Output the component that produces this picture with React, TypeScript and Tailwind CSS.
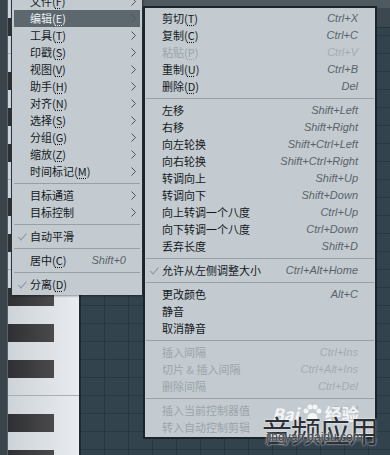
import React from "react";

type Entry =
  | { sep: true }
  | {
      sep?: false;
      label: string;
      mn?: string;
      sc?: string;
      arrow?: boolean;
      check?: boolean;
      off?: boolean;
      active?: boolean;
    };

const leftItems: Entry[] = [
  { label: "文件", mn: "F", arrow: true },
  { label: "编辑", mn: "E", arrow: true, active: true },
  { label: "工具", mn: "T", arrow: true },
  { label: "印戳", mn: "S", arrow: true },
  { label: "视图", mn: "V", arrow: true },
  { label: "助手", mn: "H", arrow: true },
  { label: "对齐", mn: "N", arrow: true },
  { label: "选择", mn: "S", arrow: true },
  { label: "分组", mn: "G", arrow: true },
  { label: "缩放", mn: "Z", arrow: true },
  { label: "时间标记", mn: "M", arrow: true },
  { sep: true },
  { label: "目标通道", arrow: true },
  { label: "目标控制", arrow: true },
  { sep: true },
  { label: "自动平滑", check: true },
  { sep: true },
  { label: "居中", mn: "C", sc: "Shift+0" },
  { sep: true },
  { label: "分离", mn: "D", check: true },
];

const rightItems: Entry[] = [
  { label: "剪切", mn: "T", sc: "Ctrl+X" },
  { label: "复制", mn: "C", sc: "Ctrl+C" },
  { label: "粘贴", mn: "P", sc: "Ctrl+V", off: true },
  { label: "重制", mn: "U", sc: "Ctrl+B" },
  { label: "删除", mn: "D", sc: "Del" },
  { sep: true },
  { label: "左移", sc: "Shift+Left" },
  { label: "右移", sc: "Shift+Right" },
  { label: "向左轮换", sc: "Shift+Ctrl+Left" },
  { label: "向右轮换", sc: "Shift+Ctrl+Right" },
  { label: "转调向上", sc: "Shift+Up" },
  { label: "转调向下", sc: "Shift+Down" },
  { label: "向上转调一个八度", sc: "Ctrl+Up" },
  { label: "向下转调一个八度", sc: "Ctrl+Down" },
  { label: "丢弃长度", sc: "Shift+D" },
  { sep: true },
  { label: "允许从左侧调整大小", sc: "Ctrl+Alt+Home", check: true },
  { sep: true },
  { label: "更改颜色", sc: "Alt+C" },
  { label: "静音" },
  { label: "取消静音" },
  { sep: true },
  { label: "插入间隔", sc: "Ctrl+Ins", off: true },
  { label: "切片 & 插入间隔", sc: "Ctrl+Alt+Ins", off: true },
  { label: "删除间隔", sc: "Ctrl+Del", off: true },
  { sep: true },
  { label: "插入当前控制器值", sc: "Ctrl+I", off: true },
  { label: "转入自动控制剪辑", off: true },
];

// descending from B: white / black
const keyPattern = ["w", "b", "w", "b", "w", "b", "w", "w", "b", "w", "b", "w"];

function Chevron() {
  return (
    <svg width="5" height="9" viewBox="0 0 5 9" className="block">
      <polyline points="0.5,0.5 4.5,4.5 0.5,8.5" fill="none" stroke="#4a545b" strokeWidth="1" />
    </svg>
  );
}

function Check() {
  return (
    <svg width="9" height="8" viewBox="0 0 9 8" className="block">
      <polyline points="0.5,4 3,7 8.5,0.5" fill="none" stroke="#8a949a" strokeWidth="1.1" />
    </svg>
  );
}

function MenuRows({ items, right }: { items: Entry[]; right?: boolean }) {
  return (
    <>
      {items.map((it, i) => {
        if (it.sep) {
          return (
            <div key={i} className="flex h-[7px] items-center">
              <div className="h-px w-full bg-[#97a0a6]" />
            </div>
          );
        }
        const tone = it.active
          ? "bg-[#5d676e] text-[#eef2f4]"
          : it.off
            ? "text-[#9ba4aa]"
            : "text-[#14191c]";
        return (
          <div key={i} className={`flex h-[17px] items-center ${tone}`}>
            <span className="flex w-[16px] shrink-0 justify-center">{it.check && <Check />}</span>
            <span className="whitespace-pre text-[11px] leading-none">
              {it.label}
              {it.mn && (
                <>
                  (<span className="underline decoration-dotted underline-offset-2">{it.mn}</span>)
                </>
              )}
            </span>
            <span
              className={`ml-auto whitespace-nowrap font-[family-name:'Liberation_Sans',sans-serif] text-[11px] italic leading-none ${
                it.off ? "text-[#a3abb1]" : "text-[#59636a]"
              } ${right ? "pr-[16px]" : ""}`}
            >
              {it.sc}
            </span>
            {!right && (
              <span className="flex w-[14px] shrink-0 justify-end pr-[4px]">{it.arrow && <Chevron />}</span>
            )}
          </div>
        );
      })}
    </>
  );
}

function Piano() {
  const rows = Array.from({ length: 26 }, (_, r) => (r + 9) % 12);
  return (
    <div className="flex w-[71px] flex-col bg-[linear-gradient(to_right,#cdd3d8,#e9ecf0)]">
      {rows.map((k, i) => (
        <div
          key={i}
          className={`flex h-[18px] shrink-0 ${k === 6 || k === 11 ? "border-b border-[#a7aeb4]" : ""}`}
        >
          {keyPattern[k] === "b" && (
            <div className="h-full w-[46px] bg-[linear-gradient(to_right,#2f3033,#4a4a4c)]" />
          )}
        </div>
      ))}
    </div>
  );
}

export default function App() {
  return (
    <div className="relative h-[455px] w-[390px] overflow-hidden bg-[#33424d] font-[family-name:'Noto_Sans_CJK_SC','Noto_Sans',sans-serif]">
      {/* piano roll behind the menus */}
      <div className="flex h-full">
        <div className="w-[8px] shrink-0 border-r border-[#56616a] bg-[#39444b]" />
        <Piano />
        <div className="w-[2px] shrink-0 bg-[#1f2a31]" />
        <div className="flex flex-1 flex-col">
          <div className="h-[8px] bg-[#4f5960]" />
          <div className="h-[20px] border-b border-[#28343c] bg-[#3c4850]" />
          <div className="flex-1 bg-[#33434e] bg-[linear-gradient(to_right,#293741_1px,transparent_1px),linear-gradient(to_bottom,#293741_1px,transparent_1px)] bg-[size:24px_18px] bg-[position:23px_7px]" />
        </div>
      </div>

      {/* main context menu */}
      <div className="absolute left-[11px] top-[-10px] w-[131px] border-l border-[#2a343a] bg-[#c3cbd0] px-[2px] pb-[2px] pt-[3px] shadow-[1px_1px_2px_rgba(0,0,0,0.4)]">
        <MenuRows items={leftItems} />
      </div>

      {/* edit submenu */}
      <div className="absolute left-[143px] top-[6px] w-[234px] border-2 border-[#1b242a] bg-[#c3cbd0] px-[1px] pb-[1px] pt-[2px]">
        <MenuRows items={rightItems} right />
      </div>

      {/* watermark */}
      <div className="absolute left-[272px] top-[404px] flex items-center gap-[3px] text-white/80">
        <span className="text-[17px] font-bold italic leading-none">Bai</span>
        <svg width="20" height="18" viewBox="0 0 20 18">
          <circle cx="4" cy="7" r="2.5" fill="white" fillOpacity="0.8" />
          <circle cx="8" cy="3" r="2.5" fill="white" fillOpacity="0.8" />
          <circle cx="13" cy="3" r="2.5" fill="white" fillOpacity="0.8" />
          <circle cx="17" cy="7" r="2.5" fill="white" fillOpacity="0.8" />
          <ellipse cx="10.5" cy="13" rx="5" ry="4" fill="white" fillOpacity="0.8" />
        </svg>
        <span className="text-[17px] font-bold leading-none">经验</span>
      </div>
      <div className="absolute left-[262px] top-[414px] text-[30px] leading-none tracking-[-1px] text-[#2b2f33] [text-shadow:0_0_2px_#fff]">
        音频应用
      </div>
      <div className="absolute left-[266px] top-[431px] font-[family-name:'Liberation_Sans',sans-serif] text-[12px] leading-none text-[#3a3f44] [text-shadow:0_0_2px_#fff]">
        jingyan.baidu.com
      </div>
    </div>
  );
}
